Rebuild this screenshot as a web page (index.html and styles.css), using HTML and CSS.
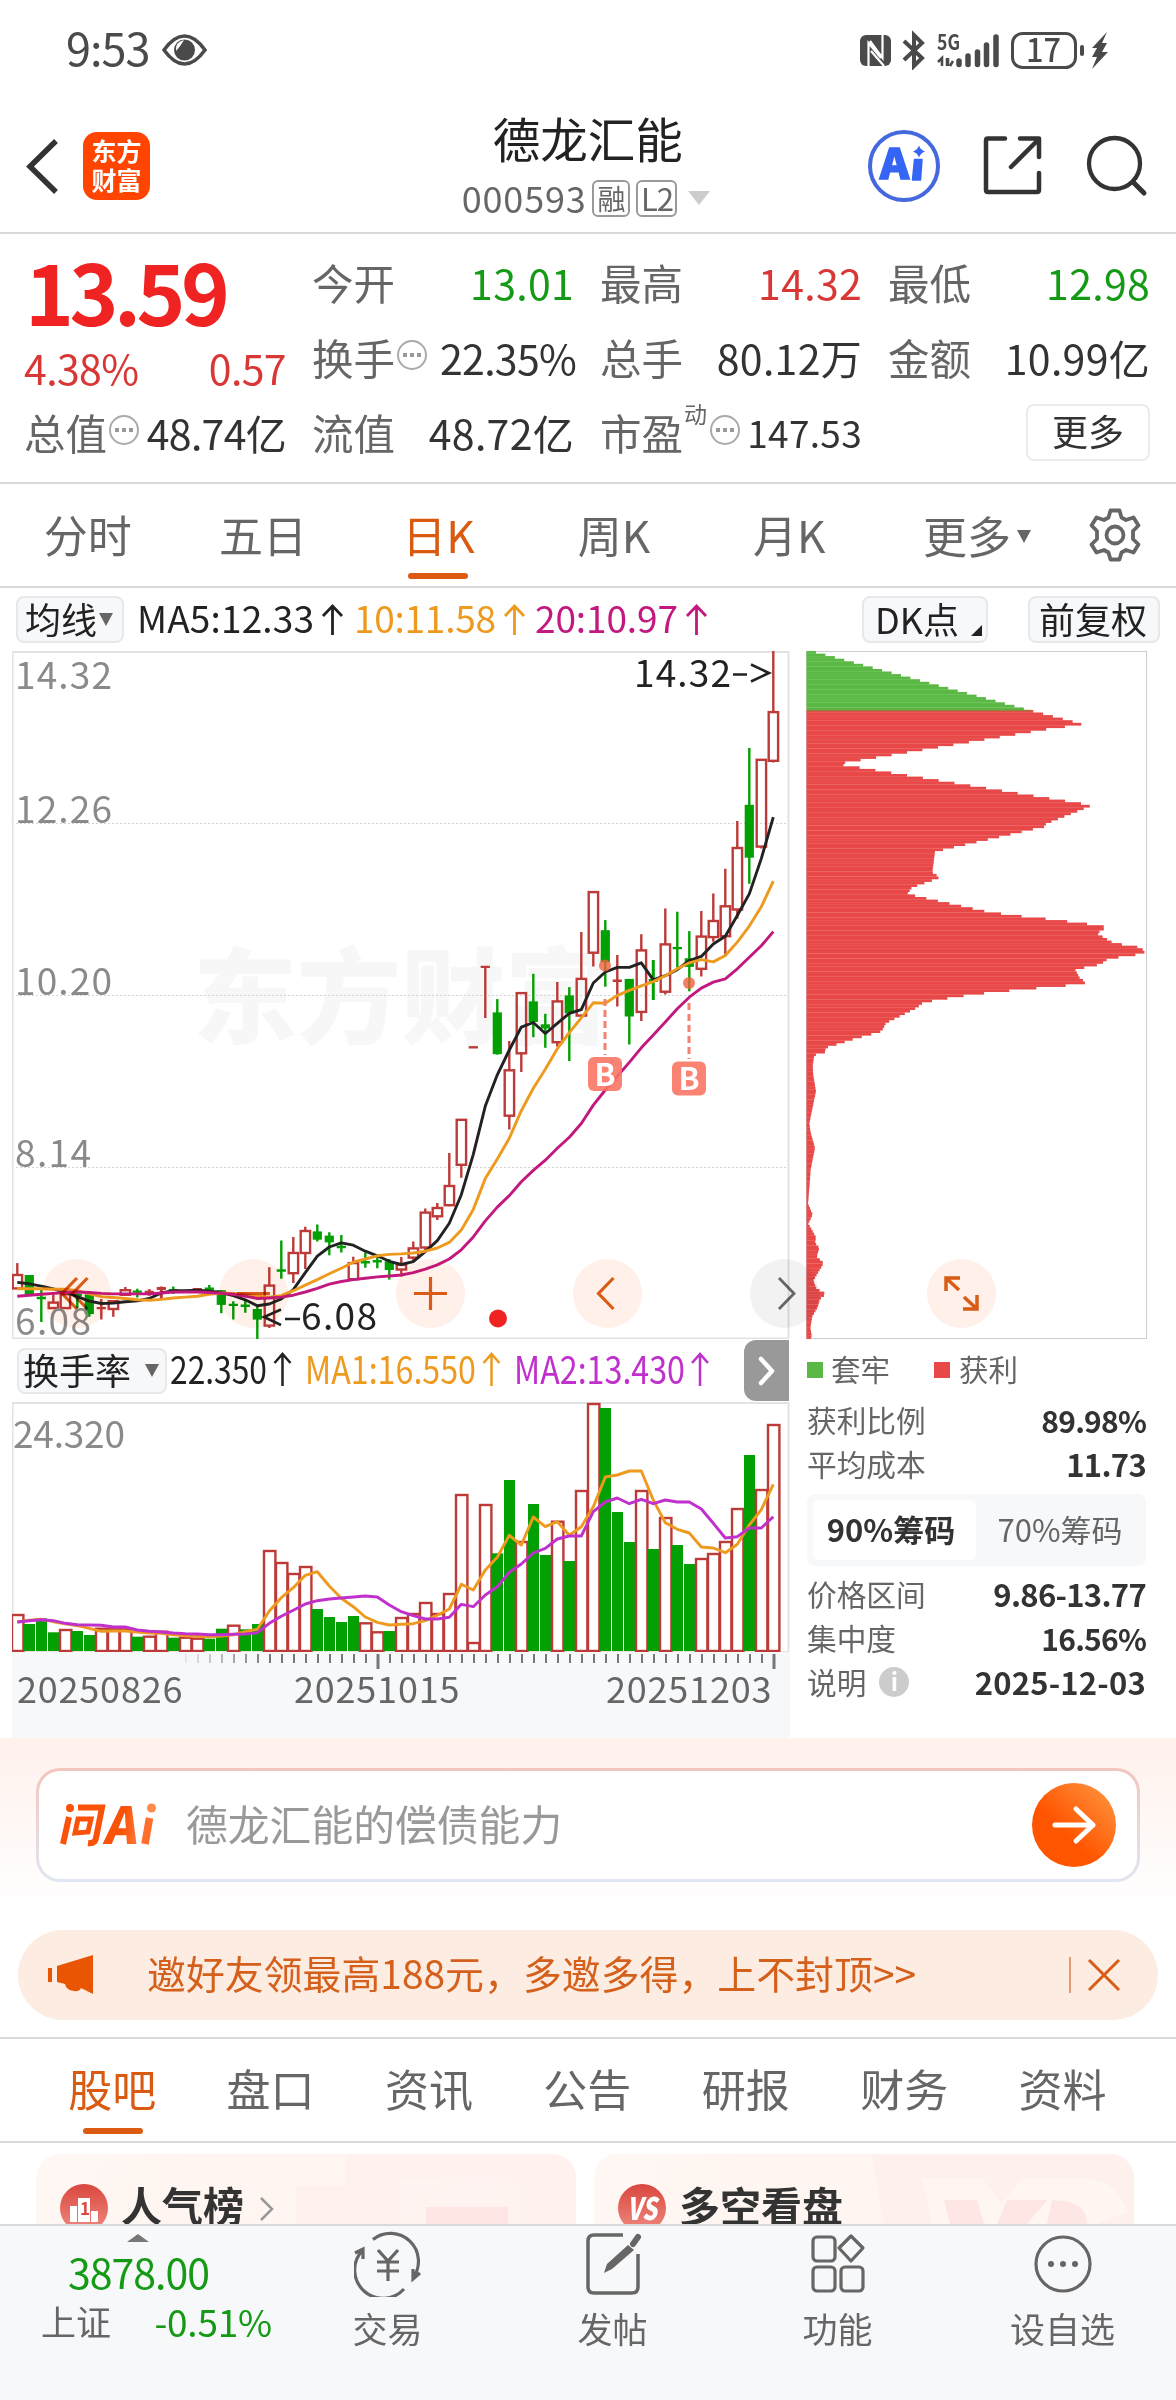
FILE: index.html
```html
<!DOCTYPE html>
<html lang="zh-CN">
<head>
<meta charset="utf-8">
<title>德龙汇能 000593</title>
<link rel="stylesheet" href="styles.css">
</head>
<body>
<div class="status">
  <span class="clock">9:53</span>
  <svg class="eye" width="45" height="32" viewBox="0 0 45 32"><path d="M2 16Q12 2 22.500 2T43 16Q33 30 22.500 30T2 16Z" fill="none" stroke="#4a4a4a" stroke-width="3.500"/><circle cx="22.500" cy="16" r="10.500" fill="#4a4a4a"/><path d="M14 17q-1-9 8-11q-4 7-8 11Z" fill="#fff"/></svg>
  <svg class="signals" width="252" height="40" viewBox="858 29 252 40">
    <rect x="860" y="34" width="31" height="31" rx="6" fill="#4a4a4a"/><path d="M868.500 66V42L881 57M882.500 33V57L870 40M871 50L884 65" stroke="#fff" stroke-width="2.200" fill="none"/>
    <path d="M904 40L922 57L914 65V34L922 42L904 59" fill="none" stroke="#4a4a4a" stroke-width="4"/>
    <text x="937" y="48.500" class="net" textLength="23" lengthAdjust="spacingAndGlyphs">5G</text>
    <path d="M942 65V57L938 61M948 57V65M947 65V57M950 65L953 60" fill="none" stroke="#4a4a4a" stroke-width="2.500"/>
    <path d="M959 63.500V60M968 63.500V55M977.500 63.500V51M986.500 63.500V44M996 63.500V36" stroke="#4a4a4a" stroke-width="5.500" stroke-linecap="round"/>
    <rect x="1012.500" y="32.500" width="63" height="34" rx="10" fill="none" stroke="#4a4a4a" stroke-width="3"/><text x="1026" y="61" class="batt" textLength="35" lengthAdjust="spacingAndGlyphs">17</text>
    <rect x="1080" y="44" width="4" height="11" rx="2" fill="#4a4a4a"/><path d="M1107 31L1092 47H1097L1092 56H1097L1092 68L1108 51H1102L1107 42H1102Z" fill="#4a4a4a"/>
  </svg>
</div>
<header class="head">
  <svg class="back" width="36" height="60" viewBox="24 136 36 60"><path d="M56 141L30 166.500L56 192" fill="none" stroke="#333" stroke-width="5.500"/></svg>
  <div class="brand"><span>东方</span><span>财富</span></div>
  <div class="name">
    <h1>德龙汇能</h1>
    <div class="code"><span>000593</span><b>融</b><b>L2</b><i class="caret"></i></div>
  </div>
  <svg class="ai" width="72" height="72" viewBox="0 0 72 72"><circle cx="36" cy="36" r="34" fill="none" stroke="#4468dd" stroke-width="4"/><text x="12" y="49" class="aitext" textLength="29" lengthAdjust="spacingAndGlyphs">A</text><path d="M46.500 29.500H54L52.500 50H44.500Z" fill="#3565f5" stroke="#3565f5" stroke-width="1.500" stroke-linejoin="round"/><path d="M51 15.500Q52.500 20 57 21.500Q52.500 23 51 27.500Q49.500 23 45 21.500Q49.500 20 51 15.500" fill="#3565f5"/></svg>
  <svg class="share" width="60" height="60" viewBox="983 137 60 60"><path d="M1005 139.500H988Q986 139.500 986 141.500V191Q986 193 988 193H1037Q1039 193 1039 191V174M1011 168L1038 141M1020 139.500H1039V158" fill="none" stroke="#333" stroke-width="4.500" stroke-linecap="round" stroke-linejoin="round"/></svg>
  <svg width="62" height="62" viewBox="1086 135 62 62"><circle cx="1114.500" cy="163.500" r="25.500" fill="none" stroke="#333" stroke-width="4.300"/><path d="M1133 182L1144 193" stroke="#333" stroke-width="5" stroke-linecap="round"/></svg>
</header>
<section class="quote">
  <div class="lead"><strong>13.59</strong></div>
  <div class="cell"><span>今开</span><em class="down">13.01</em></div>
  <div class="cell"><span>最高</span><em class="up">14.32</em></div>
  <div class="cell"><span>最低</span><em class="down">12.98</em></div>
  <div class="cell change"><em class="up">4.38%</em><em class="up">0.57</em></div>
  <div class="cell"><span>换手</span><i class="tip"></i><em class="flush">22.35%</em></div>
  <div class="cell"><span>总手</span><em>80.12万</em></div>
  <div class="cell"><span>金额</span><em>10.99亿</em></div>
  <div class="cell"><span>总值</span><i class="tip"></i><em class="tight">48.74亿</em></div>
  <div class="cell"><span>流值</span><em>48.72亿</em></div>
  <div class="cell"><span>市盈</span><sup>动</sup><i class="tip"></i><em class="small">147.53</em></div>
  <div class="cell"><button class="more">更多</button></div>
</section>
<nav class="periods">
  <span>分时</span><span>五日</span><span class="on">日K</span><span>周K</span><span>月K</span><span class="last">更多<i class="caret dark"></i></span>
  <svg width="54" height="54" viewBox="-27 -27 54 54"><path d="M-4.500-24.500H4.500L6.500-17.500L11-15L18.500-17.500L23.500-9.500L18-4V4L23.500 9.500L18.500 17.500L11 15L6.500 17.500L4.500 24.500H-4.500L-6.500 17.500L-11 15L-18.500 17.500L-23.500 9.500L-18 4V-4L-23.500-9.500L-18.500-17.500L-11-15L-6.500-17.500Z" fill="none" stroke="#666" stroke-width="3.800" stroke-linejoin="round"/><circle r="8.500" fill="none" stroke="#666" stroke-width="3.800"/></svg>
</nav>
<div class="indicators">
  <span class="chip ma">均线<i class="caret dark"></i></span>
  <svg class="malist" width="580" height="46" viewBox="136 596 580 46">
    <g class="t37"><text x="137" y="632" textLength="177" fill="#222">MA5:12.33</text><text x="354" y="632" textLength="142" fill="#ed9a1f">10:11.58</text><text x="535" y="632" textLength="143" fill="#c2187f">20:10.97</text></g>
    <g fill="none" stroke-width="2.800"><path d="M332.500 634V606M323 615L332.500 605L342 615" stroke="#222"/><path d="M514.500 634V606M505 615L514.500 605L524 615" stroke="#ed9a1f"/><path d="M696.500 634V606M687 615L696.500 605L706 615" stroke="#c2187f"/></g>
  </svg>
  <span class="chip dk">DK点<i class="corner"></i></span>
  <span class="chip fq">前复权</span>
</div>
<main class="charts">
  <div class="kline">
    <svg id="price" width="778" height="688" viewBox="12 651 778 688"></svg>
    <div class="subhead">
      <span class="chip rate">换手率<i class="caret dark"></i></span>
      <svg width="560" height="62" viewBox="168 1340 560 62">
        <g class="t38"><text x="170" y="1384" textLength="97" lengthAdjust="spacingAndGlyphs" fill="#222">22.350</text><text x="305" y="1384" textLength="171" lengthAdjust="spacingAndGlyphs" fill="#ed9a1f">MA1:16.550</text><text x="514" y="1384" textLength="171" lengthAdjust="spacingAndGlyphs" fill="#c030cc">MA2:13.430</text></g>
        <g fill="none" stroke-width="2.500"><path d="M282.500 1386V1355M274.500 1363L282.500 1354L290.500 1363" stroke="#222"/><path d="M491.500 1386V1355M483.500 1363L491.500 1354L499.500 1363" stroke="#ed9a1f"/><path d="M700 1386V1355M692 1363L700 1354L708 1363" stroke="#c030cc"/></g>
      </svg>
      <span class="next"><svg width="20" height="32" viewBox="0 0 20 32"><path d="M4 4L15 16L4 28" fill="none" stroke="#fff" stroke-width="4.500" stroke-linecap="round" stroke-linejoin="round"/></svg></span>
    </div>
    <svg id="volume" width="778" height="250" viewBox="12 1402 778 250"></svg>
    <div class="axis">
      <svg id="ticks" width="778" height="18" viewBox="12 1652 778 18"></svg>
      <div class="dates"><span>20250826</span><span>20251015</span><span>20251203</span></div>
    </div>
  </div>
  <div class="cost">
    <svg id="chips" width="341" height="688" viewBox="806 651 341 688"></svg>
    <div class="legend"><i class="sq g"></i><span>套牢</span><i class="sq r"></i><span>获利</span></div>
    <div class="row"><span>获利比例</span><b class="tight">89.98%</b></div>
    <div class="row"><span>平均成本</span><b>11.73</b></div>
    <div class="toggle"><b>90%筹码</b><span>70%筹码</span></div>
    <div class="row"><span>价格区间</span><b>9.86-13.77</b></div>
    <div class="row"><span>集中度</span><b class="tight">16.56%</b></div>
    <div class="row"><span>说明</span><i class="info">i</i><b class="wide">2025-12-03</b></div>
  </div>
  <svg class="tools" width="990" height="70" viewBox="30 1258 990 70">
    <g fill="#fff0e9"><circle cx="76.500" cy="1293.500" r="34.500"/><circle cx="253.500" cy="1293.500" r="34.500"/><circle cx="430.500" cy="1293.500" r="34.500"/><circle cx="607.500" cy="1293.500" r="34.500"/><circle cx="961.500" cy="1293.500" r="34.500"/></g>
    <circle cx="784.500" cy="1293.500" r="34.500" fill="#f2f2f2"/>
    <g fill="none" stroke="#d85c16" stroke-width="3.200"><path d="M77 1278L62 1293.500L77 1309M87.500 1278L72.500 1293.500L87.500 1309M237 1293.500H270M414 1293.500H447M430.500 1277V1310M613.500 1278L598.500 1293.500L613.500 1309"/><path d="M959 1290L946 1278M960 1278H946V1291M964 1297L977 1309M963 1309H977V1295" stroke-width="3.500"/></g>
    <path d="M779 1278L794 1293.500L779 1309" fill="none" stroke="#666" stroke-width="2.800"/>
  </svg>
</main>
<section class="ask">
  <div class="askbox">
    <svg width="98" height="46" viewBox="59 1802 98 46"><defs><linearGradient id="lg"><stop offset=".5" stop-color="#fa5208"/><stop offset="1" stop-color="#ff7a38"/></linearGradient><linearGradient id="go" x1="0" y1="1" x2="1" y2="0"><stop offset=".4" stop-color="#ff5500"/><stop offset="1" stop-color="#ff9a45"/></linearGradient></defs>
      <g fill="none" stroke="#fa5208" stroke-width="6"><path d="M69 1817L63 1844M78 1807.500H102L96 1838Q95 1844 88 1843"/><path d="M78 1819L75 1833L88 1832L91 1819Z" stroke-width="5"/></g><circle cx="70" cy="1808" r="4" fill="#fa5208"/>
      <text transform="translate(103 1844) skewX(-10)" class="logoA" textLength="33" lengthAdjust="spacingAndGlyphs" fill="url(#lg)">A</text><path d="M149.500 1818L145 1844" stroke="#ff6f2c" stroke-width="7.500"/><circle cx="151.500" cy="1808" r="4.500" fill="#ff8a4a"/></svg>
    <span>德龙汇能的偿债能力</span>
    <svg class="send" width="84" height="84" viewBox="0 0 84 84"><circle cx="42" cy="42" r="42" fill="url(#go)"/><path d="M23 42H61M44 26L61 42L44 58" fill="none" stroke="#fff" stroke-width="5" stroke-linecap="round" stroke-linejoin="round"/></svg>
  </div>
</section>
<div class="promo">
  <svg width="48" height="42" viewBox="46 1954 48 42"><path d="M48 1968H52V1982H48ZM57 1966L93 1955V1994L81 1988Q79 1992 74 1991Q66 1990 65 1984L57 1982Z" fill="#ea5504"/></svg>
  <p>邀好友领最高188元，多邀多得，上不封顶&gt;&gt;</p><i></i>
  <svg width="34" height="34" viewBox="0 0 34 34"><path d="M2 2L32 32M32 2L2 32" stroke="#d85c16" stroke-width="3"/></svg>
</div>
<nav class="topics"><span class="on">股吧</span><span>盘口</span><span>资讯</span><span>公告</span><span>研报</span><span>财务</span><span>资料</span></nav>
<section class="cards">
  <div class="card"><svg class="deco" width="280" height="70" viewBox="0 0 280 70"><path d="M50 0H280V70H230V24H105V70H0V32H50Z" fill="#fef1ee"/><path d="M130 53H212V70H130Z" fill="#fde6e3"/></svg>
    <svg class="mark" width="48" height="48" viewBox="0 0 48 48"><defs><linearGradient id="rd" x2="0" y2="1"><stop stop-color="#d9473f"/><stop offset="1" stop-color="#f08a80"/></linearGradient></defs><circle cx="24" cy="24" r="24" fill="url(#rd)"/><path d="M10 22H17V38H10ZM18 14H30V38H18ZM31 27H38V38H31Z" fill="#fff"/><text x="20" y="31" class="one">1</text></svg><b>人气榜</b>
    <svg width="16" height="26" viewBox="0 0 16 26"><path d="M2 2L13 13L2 24" fill="none" stroke="#999" stroke-width="2.500"/></svg></div>
  <div class="card"><svg class="deco" width="262" height="70" viewBox="0 0 262 70"><path d="M0 0H262V70H12Z" fill="#fef0ed"/><path d="M50 24H110L130 50L150 24H215Q245 28 255 58L225 70H60Z" fill="#fff6f2"/><path d="M72 46H105L112 70H78ZM135 46H175L155 70H125ZM180 46Q215 46 215 70H175Z" fill="#fde6e3"/></svg>
    <svg class="mark" width="48" height="48" viewBox="0 0 48 48"><circle cx="24" cy="24" r="24" fill="url(#rd)"/><text x="9" y="36" class="vs" textLength="30" lengthAdjust="spacingAndGlyphs">VS</text></svg><b>多空看盘</b></div>
</section>
<footer class="dock">
  <div class="index"><i class="uptri"></i><strong>3878.00</strong><div><span>上证</span><em>-0.51%</em></div></div>
  <div class="act"><svg width="68" height="66" viewBox="-34 -33 68 66"><g fill="none" stroke="#666" stroke-width="3.200"><path d="M-15-24.500A28 28 0 0 1 25 14M16 25A28 28 0 0 1-26-13M-33-11L-25-15V-5M32 9L25 15V5"/><path d="M-10-14L0-3L10-14M0-3V17M-11-2H11M-11 7H11"/></g></svg><span>交易</span></div>
  <div class="act"><svg width="68" height="66" viewBox="-34 -33 68 66"><path d="M10-29H-19Q-25-29-25-23V23Q-25 29-19 29H19Q25 29 25 23V-10" fill="none" stroke="#666" stroke-width="3.500"/><path d="M20-20L25-27" stroke="#666" stroke-width="6" stroke-linecap="round"/><path d="M15-19L21-14L-1 5L-9 9L-6 0Z" fill="#666"/></svg><span>发帖</span></div>
  <div class="act"><svg width="68" height="66" viewBox="-34 -33 68 66"><g fill="none" stroke="#666" stroke-width="3.200"><rect x="-25" y="-27" width="22" height="24" rx="4"/><rect x="-25" y="3" width="22" height="24" rx="4"/><rect x="3" y="3" width="22" height="24" rx="4"/><path d="M13-28L25-16L13-3L1-16Z" stroke-linejoin="round"/></g></svg><span>功能</span></div>
  <div class="act"><svg width="68" height="66" viewBox="-34 -33 68 66"><circle r="27" fill="none" stroke="#666" stroke-width="3.200"/><g fill="#666"><circle cx="-12" r="3"/><circle r="3"/><circle cx="12" r="3"/></g></svg><span>设自选</span></div>
</footer>
<script src="chart.js"></script>
</body>
</html>
```
FILE: styles.css
```css
*{box-sizing:border-box}
body{margin:0;width:1176px;height:2400px;overflow:hidden;background:#fff;color:#333;font-family:"Noto Sans CJK SC","Noto Sans",sans-serif;font-size:36px;display:flex;flex-direction:column}
body>*{flex:none}
svg{display:block;flex:none}
em,i{font-style:normal}
.caret{border:11px solid transparent;border-top:14px solid #ccc;border-bottom:0}
.caret.dark{border-width:13px 7.500px 0;border-top-color:#666}
.status{height:100px;display:flex;align-items:center;padding:0 66px 0 66px;color:#4a4a4a}
.clock{font-size:45px;letter-spacing:-1px;line-height:60px;margin-top:-7px;width:96px}
.signals{margin-left:auto}
.net{font-size:21px;font-weight:700;fill:#4a4a4a}
.batt{font-size:32px;font-weight:500;fill:#4a4a4a}
.head{height:134px;border-bottom:2px solid #d9d9d9;display:flex;align-items:center;padding:0 28px 0 24px}
.brand{width:67px;height:68px;border-radius:14px;background:#ff4500;color:#fff;font-weight:700;font-size:25px;line-height:29px;margin-left:23px;display:flex;flex-direction:column;align-items:center;justify-content:center;padding-bottom:3px}
.name{width:260px;margin-left:309px}
.name h1{margin:1px 0 0;font-size:47.500px;font-weight:400;line-height:60px;color:#222;padding-left:34px;white-space:nowrap}
.code{display:flex;align-items:center;font-size:36px;line-height:54px;height:54px;color:#666;padding-left:3px;margin-top:3px;white-space:nowrap}
.code span{letter-spacing:.800px;margin-top:-2px}
.code b{font-weight:400;font-size:28px;line-height:32px;height:37px;border:2px solid #999;border-radius:6px;margin-left:6px;width:38px;text-align:center}
.code b+b{font-size:31px;width:41px;letter-spacing:-1px}
.code .caret{margin-left:11px}
.ai{margin-left:150px}
.aitext{font-size:41px;font-weight:900;fill:#3565f5;stroke:#3565f5;stroke-width:1.500px}
.share{margin:0 43px 0 43px}
.quote{height:250px;border-bottom:2px solid #d9d9d9;padding:12px 25px 0 24px;display:grid;grid-template-columns:repeat(4,262px);grid-template-rows:75px 75px 75px;column-gap:26px}
.lead strong{font-weight:700;font-size:83px;line-height:84px;letter-spacing:-4.500px;color:#f02323;display:block;margin:2px 0 0 1px}
.cell{display:flex;align-items:center;position:relative;height:72px;font-size:41.500px;white-space:nowrap}
.cell span{color:#666}
.cell em{margin-left:auto;letter-spacing:.300px;font-size:41px}
.cell em.flush{margin-right:-2px;letter-spacing:-.700px}
.cell em.tight{letter-spacing:-.700px}
.cell em.small{font-size:37px}
.cell.change{padding-top:19px}
.cell.change em{margin:0;letter-spacing:-.600px}
.cell.change em+em{margin-left:auto}
.tip{width:30px;height:30px;border:2px solid #aaa;border-radius:50%;margin:-4px 0 0 2px;background:radial-gradient(circle 2.500px at 6px 13px,#999 90%,transparent) ,radial-gradient(circle 2.500px at 13px 13px,#999 90%,transparent),radial-gradient(circle 2.500px at 20px 13px,#999 90%,transparent)}
.cell sup{font-size:23px;line-height:23px;color:#666;align-self:flex-start;margin:6px 1px 0 1px}
.down{color:#159a15}.up{color:#d93636}
.more{margin-left:auto;width:124px;height:57px;border:2px solid #ebebeb;border-radius:8px;background:#fff;color:#333;font:36px/48px "Noto Sans CJK SC",sans-serif;padding:0 0 4px}
.periods{height:104px;border-bottom:2px solid #d9d9d9;display:flex;align-items:center;font-size:44px;color:#666}
.periods span{width:175.400px;height:102px;line-height:100px;text-align:center;position:relative;display:block}
.periods .last{width:160px;margin-left:20px;display:flex;align-items:center;justify-content:center;gap:6px}
.periods .last .caret{margin-top:3px}
.periods svg{margin:0 0 0 31px}
.on{color:#d95a10}
.on::after{content:"";position:absolute;left:50%;margin-left:-30px;bottom:7px;width:60px;height:6px;border-radius:3px;background:#dc5a12}
.topics .on::after{margin-left:-29px}
.indicators{height:63px;display:flex;align-items:center;padding:0 16px;color:#222}
.chip{background:#f7f8fa;border:2px solid #e6e8ec;border-radius:8px;height:47px;line-height:38px;font-size:36px;display:flex;align-items:center;white-space:nowrap;position:relative;flex:none;padding-bottom:4px}
.chip .caret{margin-top:4px}
.ma{width:108px;padding-left:7px;gap:2px}
.malist{margin-left:12px}
.dk{width:126px;margin-left:146px;padding-left:11px}
.corner{position:absolute;right:4px;bottom:5px;border-left:11px solid transparent;border-bottom:11px solid #222}
.fq{width:132px;margin-left:40px;padding-left:9px}
.t37 text{font-size:37px}
.t38 text{font-size:38px}
.charts{position:relative;display:grid;grid-template-columns:778px 341px;column-gap:16px;padding-left:12px;height:1087px}
.tools{position:absolute;left:30px;top:607px;mix-blend-mode:multiply}
.subhead{height:63px;display:flex;align-items:center;color:#222}
.rate{width:150px;margin-left:5px;padding-left:4px;gap:14px;height:46px}
.subhead>svg{margin-left:1px}
.next{width:45px;height:61px;background:#999;border-radius:12px 0 0 12px;display:grid;place-items:center;margin-left:16px}
.axis{height:86px;background:#f7f8fa}
.dates{display:grid;grid-template-columns:277px 312px auto;color:#666;font-size:36px;line-height:34px;letter-spacing:.800px;padding:0 0 0 5px}
.g37{font-size:37px;fill:#8a8a8a}
.k37{font-size:37px;fill:#222}
.wm{font-size:104px;font-weight:900;fill:#f7f7f7}
.bs{font-size:31px;font-weight:700;fill:#fff}
.legend{height:59px;display:flex;align-items:center;font-size:29.500px;color:#666}
.legend span{margin-bottom:1px}
.sq{width:16px;height:16px;margin:3px 8px 0 1px}
.sq.g{background:#5ab844}.sq.r{background:#e84848;margin-left:44px;margin-right:9px}
.row{height:44px;line-height:40px;display:flex;align-items:center;font-size:29.700px;color:#666;padding:0 1px}
.row b{margin-left:auto;color:#333;font-weight:600;font-size:31px;letter-spacing:-.700px}
.row b.tight{letter-spacing:-.800px;font-size:30px}
.row b.wide{letter-spacing:.200px}
.toggle{width:339px;height:72px;margin:8px 0 6px 1px;background:#f7f8fa;border-radius:8px;padding:6px;display:grid;grid-template-columns:163px 1fr;line-height:58px;text-align:center;font-size:31px;color:#666}
.toggle b{background:#fff;border-radius:6px;color:#333;letter-spacing:0;padding-right:7px}
.toggle span{padding-left:4px}
.info{width:30px;height:30px;border-radius:50%;background:#ccc;color:#fff;font-weight:700;font-size:24px;line-height:28px;text-align:center;margin-left:13px}
.ask{height:192px;background:linear-gradient(#fff1ec,#fff 90%);padding:30px 36px 0}
.askbox{height:114px;border:3px solid transparent;border-radius:24px;background:linear-gradient(#fff,#fff) padding-box,linear-gradient(#f3c6be,#e0e6f2) border-box;display:flex;align-items:center;padding:0 21px 0 20px;color:#999;font-size:41.800px}
.askbox span{margin-left:29px;line-height:60px;padding-bottom:5px}
.logoA{font-size:51px;font-weight:900}
.send{margin-left:auto}
.promo{width:1140px;height:90px;margin:0 18px;border-radius:45px;background:#fdece2;display:flex;align-items:center;color:#d4601c;font-size:38.900px;padding:0 37px 0 28px}
.promo p{margin:0 auto 6px 53px;line-height:50px;white-space:nowrap}
.promo>i{width:2px;height:36px;background:#e59a6b;margin-right:16px}
.topics{margin-top:17px;height:106px;border-top:2px solid #d9d9d9;border-bottom:2px solid #d9d9d9;display:grid;grid-template-columns:repeat(7,158.400px);padding-left:33px;font-size:44px;line-height:98px;text-align:center;color:#666}
.topics span{position:relative}
.cards{height:81px;overflow:hidden;display:grid;grid-template-columns:540px 540px;gap:18px;padding:11px 36px 0}
.card{height:140px;border-radius:24px;background:linear-gradient(110deg,#fff7f3,#fef2ef);overflow:hidden;position:relative;display:flex;align-items:flex-start;padding:30px 24px}
.card b{font-size:41px;line-height:50px;color:#333;margin:-5px 15px 0 13px;position:relative}
.card>svg:last-child{margin-top:12px;position:relative}
.mark{position:relative}
.deco{position:absolute;right:0;top:0}
.one{font-size:17px;font-weight:700;fill:#d9473f}
.vs{font-size:31px;font-weight:900;font-style:italic;fill:#fff}
.dock{height:177px;border-top:2px solid #d9d9d9;background:#f7f8fa;display:grid;grid-template-columns:275px repeat(4,225px);color:#666;line-height:44px}
.index{padding-left:41px;position:relative}
.uptri{position:absolute;left:127px;top:8px;border:11px solid transparent;border-top:0;border-bottom:8px solid #777}
.index strong{font-weight:400;font-size:41px;letter-spacing:-1px;color:#159a15;display:block;margin:23px 0 0 27px}
.index div{display:flex;justify-content:space-between;font-size:35px;margin-top:6px}
.index em{color:#159a15;font-size:37px;letter-spacing:-.200px;margin-right:3px}
.act{display:flex;flex-direction:column;align-items:center;font-size:35px;padding-top:5px}
.act span{margin-top:9px}
```
FILE: chart.js
```js
// Each candle: [high, body top, body bottom, low, rising]; a body without height is a doji.
const K = [
[1357,1383,1412,1412,1],[1383,1383,1425,1425,0],[1415,1433,1433,1485,0],[1425,1443,1455,1455,1],[1420,1425,1455,1455,1],[1420,1427,1427,1455,0],[1425,1425,1468,1474,0],[1435,1455,1455,1480,1],
[1440,1440,1457,1474,1],[1409,1416,1426,1428,1],[1413,1419,1419,1432,0],[1414,1417,1424,1428,1],[1408,1409,1416,1436,1],[1408,1416,1416,1424,0],[1415,1418,1418,1421,0],[1411,1412,1417,1418,1],
[1405,1413,1413,1420,0],[1416,1416,1448,1466,0],[1440,1448,1448,1480,0],[1437,1450,1450,1465,0],[1450,1457,1480,1523,0],[1366,1406,1493,1498,1],[1308,1373,1373,1391,0],[1300,1335,1379,1400,1],
[1278,1287,1335,1370,1],[1273,1288,1306,1310,0],[1290,1297,1312,1340,0],[1296,1322,1322,1334,0],[1343,1357,1392,1392,1],[1334,1355,1355,1367,0],[1340,1353,1353,1368,0],[1348,1353,1372,1393,0],
[1344,1361,1371,1386,1],[1310,1325,1345,1355,1],[1238,1247,1323,1330,1],[1226,1237,1255,1263,1],[1117,1189,1231,1233,1],[1044,1045,1143,1171,1],[887,887,887,887,1],[712,712,712,823,1],
[782,811,902,903,0],[873,937,1036,1066,1],[768,769,900,941,1],[727,787,832,865,0],[814,837,846,888,0],[745,787,876,885,1],[756,774,813,917,0],[636,738,818,820,1],
[548,549,681,711,1],[610,632,702,755,0],[686,742,742,798,1],[738,738,820,881,0],[641,676,810,830,1],[697,738,745,784,0],[585,663,766,772,1],[592,671,671,713,0],
[634,693,712,765,0],[590,646,716,733,1],[552,612,647,657,1],[498,580,645,686,1],[394,453,587,607,1],[235,359,474,531,0],[260,261,450,454,1],[24,157,263,267,1]];
const MA5 = [1399,1402,1407,1413,1420,1430,1440,1445,1444,1441,1439,1434,1422,1417,1417,1416,1418,1421,1428,1437,1450,1446,1435,1415,1378,1342,1322,1313,1318,1331,1341,1353,1360,1354,1332,1308,1270,1208,1120,1015,947,893,843,833,857,835,813,805,747,723,713,713,703,740,731,718,698,689,662,645,600,553,476,386];
const MA10 = [1413,1413,1413,1414,1414,1417,1424,1430,1432,1434,1437,1438,1436,1433,1431,1429,1425,1422,1423,1425,1429,1431,1428,1417,1405,1393,1380,1368,1355,1348,1341,1338,1337,1335,1331,1324,1312,1285,1240,1173,1130,1085,1025,976,935,890,855,823,790,791,774,763,753,744,731,716,703,696,701,687,658,623,581,525];
const MA20 = [1429,1427,1425,1423,1421,1420,1421,1423,1424,1424,1424,1424,1422,1420,1420,1420,1421,1423,1425,1429,1434,1433,1431,1427,1420,1412,1403,1397,1393,1390,1387,1385,1383,1378,1370,1361,1348,1328,1300,1265,1235,1210,1180,1155,1133,1107,1083,1053,1013,980,950,920,888,860,832,803,778,758,745,738,716,691,666,635];
// Turnover bar tops; negative marks a falling day.
const V = [825,-852,-835,-877,870,-873,-885,866,868,868,-890,890,875,-893,893,896,-896,-866,857,-868,-852,633,669,702,681,-807,-831,-846,-828,850,877,-873,834,822,789,822,762,465,909,495,-640,-420,606,-492,-645,545,-663,453,192,-204,-516,-606,453,-627,534,-615,-672,657,642,606,507,-345,450,255];
const V1 = [846,841,838,845,851,857,865,874,873,873,876,879,880,884,887,889,890,888,884,875,868,813,773,743,706,695,738,775,800,831,847,855,853,851,842,826,807,733,750,690,652,586,615,531,560,545,586,560,500,411,405,393,393,480,548,568,579,621,624,638,613,555,509,433];
const V2 = [846,842,839,842,850,854,855,856,861,861,870,874,876,879,881,882,884,884,883,882,878,850,829,811,792,782,777,774,771,768,771,795,815,827,837,837,832,793,800,765,740,697,672,639,625,597,588,588,515,486,474,491,478,491,480,486,486,507,550,594,590,564,564,530];
// Cost distribution outline: [level, width].
const D = [[24,78],[152,728],[180,876],[186,823],[191,772],[264,165],[270,160],[275,208],[357,905],[363,886],[397,768],[403,765],[408,735],[452,468],[458,435],[503,427],[514,449],[520,428],[531,384],[537,365],[550,352],[556,386],[590,598],[602,731],[607,808],[613,857],[619,939],[625,945],[636,920],[658,973],[664,1037],[675,1069],[681,1050],[686,1002],[692,953],[703,932],[709,893],[714,855],[737,872],[742,900],[748,850],[753,768],[764,608],[770,536],[776,483],[786,400],[798,380],[831,288],[849,275],[854,251],[865,195],[877,143],[887,97],[892,122],[898,80],[905,72],[925,68],[945,70],[980,78],[1000,72],[1050,58],[1070,62],[1103,75],[1150,62],[1190,58],[1225,54],[1248,68],[1268,55],[1298,78],[1310,75],[1321,88],[1340,80],[1354,101],[1392,70],[1410,80],[1421,108],[1432,90],[1450,83],[1470,67],[1495,61],[1510,65],[1523,62]];

const X = i => 17.3 + 12 * i;
const Y = v => +(640 + v / 2.1778).toFixed(1);
const W = v => +(1340 + v / 3).toFixed(1);
const RED = '#bc3a38', GREEN = '#03a003';
const rect = (x, y, w, h, a) => `<rect x="${x}" y="${y}" width="${w}" height="${h}" ${a}/>`;
const line = (a, f, c) => `<polyline fill="none" stroke="${c}" stroke-width="2.9" stroke-linejoin="round" points="${a.map((v, i) => X(i) + ',' + f(v)).join(' ')}"/>`;
const grid = y => `<path d="M12 ${y}H788" stroke="#d4d4d4" stroke-width="1" stroke-dasharray="2 2"/>`;
const label = (x, y, s, c, len) => `<text x="${x}" y="${y}" class="${c}" textLength="${len}">${s}</text>`;

let p = label(193, 1036, '东方财富', 'wm', 416) + [823.5, 995.5, 1167.5].map(grid).join('');
p += rect(12.5, 652, 776, 686.5, 'fill="none" stroke="#e3e3e3" stroke-width="2"');
K.forEach(([h, t, b, l, up], i) => {
  const c = up ? RED : GREEN, x = X(i), s = `stroke="${c}" stroke-width="2.4"`;
  if (b - t < 8) {
    p += `<path d="M${x} ${Y(h)}V${Y(l)}M${x - 4.6} ${Y((t + b) / 2)}h9.2" stroke="${c}" stroke-width="${b > t ? 3 : 2.4}"/>`;
  } else if (up) {
    p += `<path d="M${x} ${Y(h)}V${Y(t)}M${x} ${Y(b)}V${Y(l)}" ${s}/>` + rect(x - 4.6, Y(t), 9.4, Y(b) - Y(t), `fill="none" ${s}`);
  } else {
    p += `<path d="M${x} ${Y(h)}V${Y(l)}" ${s}/>` + rect(x - 4.6, Y(t), 9.2, Y(b) - Y(t), `fill="${c}"`);
  }
});
p += line(MA5, Y, '#222') + line(MA10, Y, '#ed9a1f') + line(MA20, Y, '#c2187f');
p += [[605, 965.5, 999, 1055, 1074], [689, 983, 1003, 1059, 1078.5]].map(([x, y, a, b, c]) =>
  `<circle cx="${x}" cy="${y}" r="6" fill="#f06040" fill-opacity=".8"/><path d="M${x} ${a}V${b}" stroke="#f4806f" stroke-width="3" stroke-dasharray="7 4"/>` +
  rect(x - 17, c - 17, 34, 34, 'rx="6" fill="#fa7565" fill-opacity=".9"') + `<text x="${x}" y="${c + 11.5}" text-anchor="middle" class="bs">B</text>`).join('');
p += label(15, 688.5, '14.32', 'g37', 97) + label(15, 823, '12.26', 'g37', 97) + label(15, 995, '10.20', 'g37', 97) + label(15, 1167, '8.14', 'g37', 76) + label(15, 1335, '6.08', 'g37', 76);
p += label(634, 686.5, '14.32', 'k37', 97) + label(301, 1330, '6.08', 'k37', 76);
p += `<path d="M733 674.500H747M751 664.500L769 673L751 681.500M300 1319H285M281 1309.500L264 1317L281 1325" fill="none" stroke="#222" stroke-width="2.600"/><circle cx="498" cy="1318.500" r="9" fill="#f02323"/>`;
document.getElementById('price').innerHTML = p;

let v = rect(12.5, 1403, 776, 249, 'fill="none" stroke="#e3e3e3" stroke-width="2"');
V.forEach((n, i) => {
  const y = W(Math.abs(n)), x = X(i);
  v += n > 0 ? rect(x - 5.3, y, 11.4, 1651 - y, `fill="#fff" stroke="${RED}" stroke-width="2.4"`) : rect(x - 5.3, y, 11, 1651 - y, `fill="${GREEN}"`);
});
v += line(V1, W, '#ed9a1f') + line(V2, W, '#c030cc') + label(13, 1448, '24.320', 'g37', 112);
document.getElementById('volume').innerHTML = v;

let t = '';
for (let i = 14; i < 64; i++) {
  const big = i === 30 || i === 63;
  t += `<path d="M${X(i) + .7} 1654v${big ? 15 : 9}" stroke="#777" stroke-width="${big ? 3 : 2}" opacity="${Math.min(1, (i - 13) / 8)}"/>`;
}
document.getElementById('ticks').innerHTML = t;

let d = rect(806.5, 651.5, 340, 687, 'fill="none" stroke="#ccc"'), j = 0;
for (let y = 24; y < 1522; y += 5.58) {
  while (j < D.length - 2 && D[j + 1][0] < y) j++;
  const [a, b] = [D[j], D[j + 1]], w = a[1] + (b[1] - a[1]) * Math.max(0, Math.min(1, (y - a[0]) / (b[0] - a[0])));
  d += rect(806.5, Y(y), (w / 3 - 16.5).toFixed(1), 2.8, `fill="${y < 152 ? '#5ab844' : '#e84848'}"`);
}
document.getElementById('chips').innerHTML = d + '<path d="M807 710.500H1031" stroke="#94803e" stroke-width="1.500"/>';
```
